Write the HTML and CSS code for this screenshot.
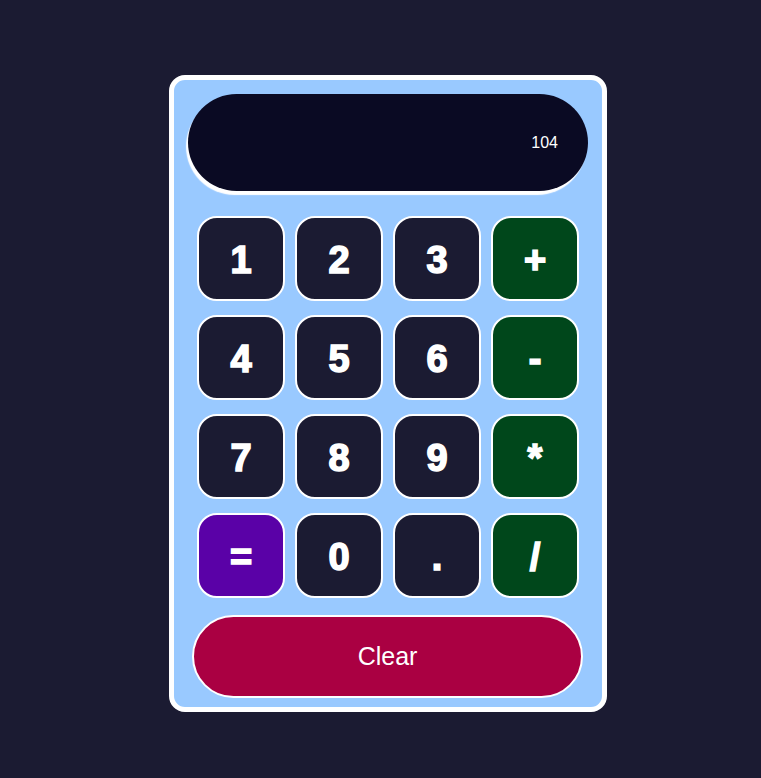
FILE: index.html
```html
<!DOCTYPE html>
<html lang="en">
<head>
<meta charset="UTF-8">
<title>Calculator</title>
<link rel="stylesheet" href="styles.css">
</head>
<body>
<main class="page">
  <div class="calculator">
    <div class="display"><span class="display-value">104</span></div>
    <div class="keys">
      <button class="key">1</button>
      <button class="key">2</button>
      <button class="key">3</button>
      <button class="key op">+</button>
      <button class="key">4</button>
      <button class="key">5</button>
      <button class="key">6</button>
      <button class="key op">-</button>
      <button class="key">7</button>
      <button class="key">8</button>
      <button class="key">9</button>
      <button class="key op">*</button>
      <button class="key equals">=</button>
      <button class="key">0</button>
      <button class="key">.</button>
      <button class="key op">/</button>
    </div>
    <button class="clear">Clear</button>
  </div>
</main>
</body>
</html>
```

FILE: styles.css
```css
html, body {
  margin: 0;
  padding: 0;
  background: #1b1b32;
  height: 100%;
}

.page {
  display: flex;
  justify-content: flex-start;
  padding: 75px 0 0 169px;
}

.calculator {
  width: 428px;
  height: 627px;
  background: #99c9ff;
  border: 5px solid #ffffff;
  border-radius: 16px;
  display: flex;
  flex-direction: column;
  box-sizing: content-box;
}

.display {
  margin: 14px 14px 0 14px;
  height: 97px;
  background: #0a0a23;
  border-radius: 49px;
  box-shadow: -2px 4px 1px #ffffff;
  display: flex;
  align-items: center;
  justify-content: flex-end;
  padding-right: 30px;
}

.display-value {
  font-family: "Liberation Sans", Arial, sans-serif;
  font-size: 16px;
  color: #ffffff;
}

.keys {
  margin: 25px 23px 0 23px;
  display: grid;
  grid-template-columns: repeat(4, 88px);
  grid-auto-rows: 85px;
  column-gap: 10px;
  row-gap: 14px;
}

.key {
  margin: 0;
  padding: 4px 0 0 0;
  background: #1b1b32;
  color: #ffffff;
  border: 2px solid #ffffff;
  border-radius: 20px;
  font-family: "Liberation Sans", Arial, sans-serif;
  font-weight: 700;
  font-size: 38px;
  letter-spacing: 0;
  -webkit-text-stroke: 1.6px #ffffff;
  cursor: pointer;
}

.key.op {
  background: #00471b;
}

.key.equals {
  background: #5a01a7;
}

.clear {
  margin: 17px 19px 0 18px;
  height: 83px;
  background: #aa0042;
  color: #ffffff;
  border: 2px solid #ffffff;
  border-radius: 42px;
  font-family: "Liberation Sans", Arial, sans-serif;
  font-size: 25px;
  cursor: pointer;
}
```
